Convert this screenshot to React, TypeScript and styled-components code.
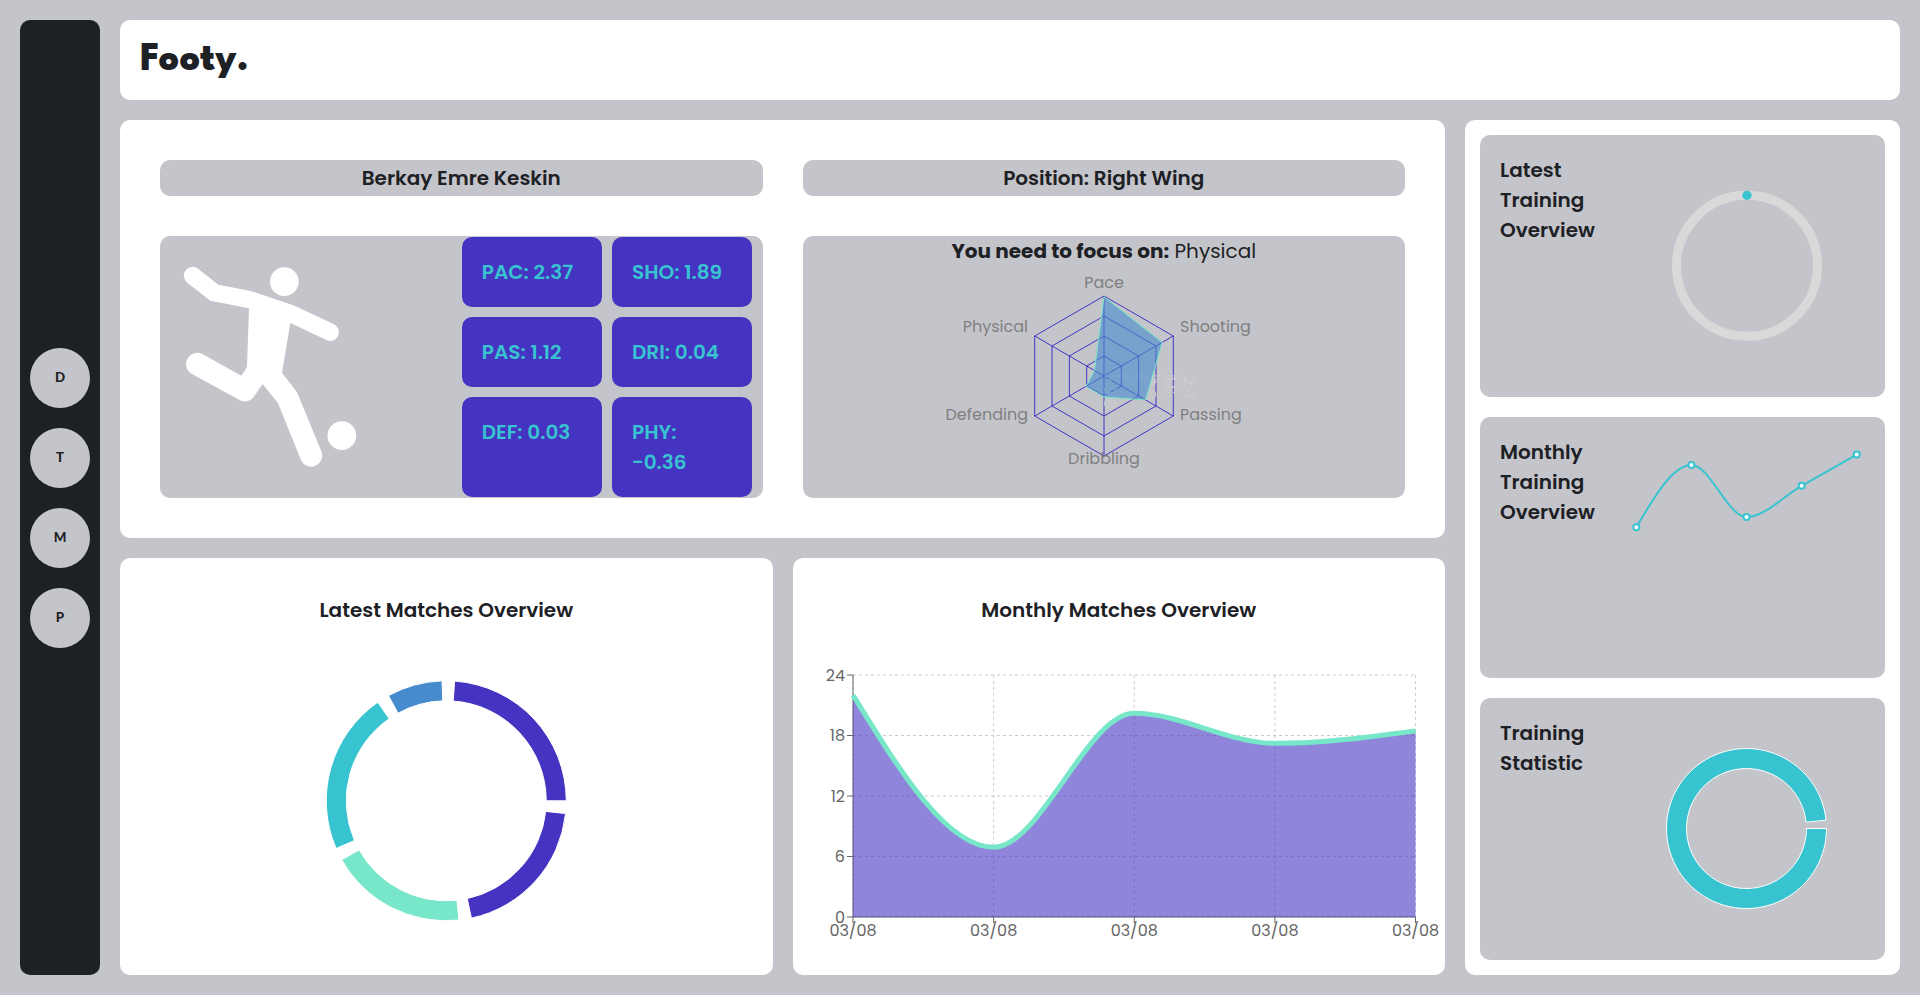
import React from 'react';
import styled, { createGlobalStyle } from 'styled-components';

const c = {
  gray: '#c4c5ca',
  dark: '#1d2024',
  purple: '#4533c1',
  teal: '#38c3d1',
  mint: '#78e6c8',
  blue: '#468bce',
  white: '#ffffff',
};

const Global = createGlobalStyle`
  * { box-sizing: border-box; }
  html, body { margin: 0; padding: 0; }
  body {
    background: ${c.gray};
    color: ${c.dark};
    font-family: Poppins, Inter, 'Open Sans', sans-serif;
    overflow: hidden;
  }
  svg { display: block; }
`;

/* ---------- layout ---------- */

const Page = styled.div`
  display: flex;
  gap: 20px;
  width: 1920px;
  height: 995px;
  padding: 20px;
`;

const Sidebar = styled.nav`
  display: flex;
  flex-direction: column;
  align-items: center;
  justify-content: center;
  gap: 20px;
  width: 80px;
  border-radius: 10px;
  background: ${c.dark};
`;

const NavButton = styled.a`
  display: flex;
  align-items: center;
  justify-content: center;
  width: 60px;
  height: 60px;
  padding-top: 1px;
  border-radius: 50%;
  background: ${c.gray};
  font: 900 13.333px/1 Lato, sans-serif;
`;

const Content = styled.div`
  display: grid;
  flex: 1;
  grid-template-columns: 1325px 1fr;
  grid-template-rows: 80px 1fr;
  gap: 20px;
`;

const Panel = styled.section`
  border-radius: 10px;
  background: ${c.white};
`;

const Header = styled(Panel)`
  grid-column: 1 / -1;
  padding: 21px 20px 19px;
`;

const Logo = styled.h1`
  margin: 0;
  font: 800 40px/40px 'League Spartan', Lato, sans-serif;
`;

const Main = styled.main`
  display: grid;
  grid-template-rows: 1fr 1fr;
  gap: 20px;
`;

const PlayerPanel = styled(Panel)`
  display: grid;
  grid-template-columns: 1fr 1fr;
  grid-template-rows: 36px 1fr;
  gap: 40px;
  padding: 40px;
`;

const Badge = styled.div`
  display: flex;
  align-items: center;
  justify-content: center;
  border-radius: 10px;
  background: ${c.gray};
`;

const Label = styled.span`
  font-size: 20px;
  font-weight: 600;
  line-height: 30px;
  white-space: nowrap;
`;

const PlayerCard = styled.div`
  display: flex;
  align-items: center;
  justify-content: space-between;
  padding-right: 10.2px;
  border-radius: 10px;
  background: ${c.gray};
`;

const Stats = styled.div`
  display: grid;
  grid-template-columns: 140.3px 140.3px;
  grid-template-rows: 70px 70px 100px;
  gap: 10px;
`;

const Stat = styled.div`
  display: flex;
  flex-direction: column;
  padding: 20px;
  border-radius: 10px;
  background: ${c.purple};
  color: ${c.teal};
`;

const RadarCard = styled.div`
  display: flex;
  flex-direction: column;
  align-items: center;
  border-radius: 10px;
  background: ${c.gray};
`;

const Focus = styled.p`
  margin: 0;
  font-size: 20px;
  line-height: 30px;
  font-weight: 400;

  b {
    font-weight: 700;
  }
`;

const Matches = styled.div`
  display: grid;
  grid-template-columns: 1fr 1fr;
  gap: 20px;
`;

const ChartPanel = styled(Panel)`
  display: flex;
  flex-direction: column;
  align-items: center;
  padding-top: 37.5px;
`;

const Aside = styled(Panel)`
  display: flex;
  flex-direction: column;
  gap: 20px;
  padding: 15px;
`;

const TrainingCard = styled.div`
  display: flex;
  flex: 1;
  justify-content: space-between;
  padding-left: 20px;
  border-radius: 10px;
  background: ${c.gray};
`;

const CardTitle = styled.div`
  display: flex;
  flex-direction: column;
  padding-top: 20px;
`;

/* ---------- chart helpers ---------- */

type Point = [number, number];

/** Monotone cubic interpolation through points with increasing x. */
function monotone(points: Point[]): string {
  const n = points.length;
  const slope = (i: number) => (points[i + 1][1] - points[i][1]) / (points[i + 1][0] - points[i][0]);
  const t: number[] = [];
  for (let i = 1; i < n - 1; i++) {
    const h0 = points[i][0] - points[i - 1][0];
    const h1 = points[i + 1][0] - points[i][0];
    const s0 = slope(i - 1);
    const s1 = slope(i);
    const p = (s0 * h1 + s1 * h0) / (h0 + h1);
    t[i] = (Math.sign(s0) + Math.sign(s1)) * Math.min(Math.abs(s0), Math.abs(s1), 0.5 * Math.abs(p)) || 0;
  }
  t[0] = (3 * slope(0) - t[1]) / 2;
  t[n - 1] = (3 * slope(n - 2) - t[n - 2]) / 2;
  let d = `M${points[0][0]},${points[0][1]}`;
  for (let i = 0; i < n - 1; i++) {
    const [x0, y0] = points[i];
    const [x1, y1] = points[i + 1];
    const dx = (x1 - x0) / 3;
    d += `C${x0 + dx},${y0 + dx * t[i]} ${x1 - dx},${y1 - dx * t[i + 1]} ${x1},${y1}`;
  }
  return d;
}

/** Ring sector, angles in degrees counted counter-clockwise from the right. */
function sector(cx: number, cy: number, inner: number, outer: number, from: number, to: number): string {
  const at = (r: number, a: number) => {
    const rad = (a * Math.PI) / 180;
    return `${cx + r * Math.cos(rad)},${cy - r * Math.sin(rad)}`;
  };
  const large = to - from > 180 ? 1 : 0;
  return `M${at(outer, from)}A${outer},${outer} 0 ${large} 0 ${at(outer, to)}L${at(inner, to)}A${inner},${inner} 0 ${large} 1 ${at(inner, from)}Z`;
}

/* ---------- drawings ---------- */

const PlayerIcon = () => (
  <svg width="200" height="261.5" viewBox="30 48 600 784.5" fill={c.white}>
    <circle cx="403" cy="185" r="43" />
    <circle cx="575.5" cy="647" r="43" />
    <path d="M144 146L205 194L302 213L430 256L552 313A26 26 0 0 1 529 360L421 309L396 458L441 517L514 694A33 33 0 0 1 453 720L384 550L338 492L313 528A32 32 0 0 1 270 541L122 460A34 34 0 0 1 157 402L274 467L291 442L297 265L181 242L112 188A26 26 0 0 1 144 146Z" />
  </svg>
);

const skills: { name: string; value: number; x: number; y: number; anchor: 'start' | 'middle' | 'end' }[] = [
  { name: 'Pace', value: 2.37, x: 301, y: 22, anchor: 'middle' },
  { name: 'Shooting', value: 1.89, x: 377, y: 66, anchor: 'start' },
  { name: 'Passing', value: 1.12, x: 377, y: 154, anchor: 'start' },
  { name: 'Dribbling', value: 0.04, x: 301, y: 198, anchor: 'middle' },
  { name: 'Defending', value: 0.03, x: 225, y: 154, anchor: 'end' },
  { name: 'Physical', value: -0.36, x: 225, y: 66, anchor: 'end' },
];

const RadarChart = () => {
  const cx = 301;
  const cy = 110;
  const hex = (radii: number[]) =>
    radii
      .map((r, i) => {
        const a = (i * Math.PI) / 3;
        return `${cx + r * Math.sin(a)},${cy - r * Math.cos(a)}`;
      })
      .join(' ');
  const ticks = ['-0.8', '0', '0.8', '1.6', '2.4'];
  return (
    <svg width="602.5" height="231" fontSize="16">
      <g fill="none" stroke={c.purple}>
        {[0, 1, 2, 3, 4, 5].map((i) => {
          const a = (i * Math.PI) / 3;
          return <line key={i} x1={cx} y1={cy} x2={cx + 80 * Math.sin(a)} y2={cy - 80 * Math.cos(a)} />;
        })}
        {[20, 40, 60, 80].map((r) => (
          <polygon key={r} points={hex(Array(6).fill(r))} />
        ))}
      </g>
      <g fill="#808080">
        {skills.map((s) => (
          <text key={s.name} x={s.x} y={s.y} textAnchor={s.anchor}>
            {s.name}
          </text>
        ))}
      </g>
      <line x1={cx} y1={cy} x2={cx + 80} y2={cy} stroke="#cccccc" />
      <g fill="#cccccc">
        {ticks.map((t, i) => (
          <text key={t} transform={`translate(${cx + i * 20} ${cy}) rotate(90)`}>
            {t}
          </text>
        ))}
      </g>
      <polygon points={hex(skills.map((s) => ((s.value + 0.8) / 3.2) * 80))} fill={c.blue} fillOpacity="0.6" stroke={c.mint} />
    </svg>
  );
};

const slices = [
  { from: 0, to: 86, color: c.purple },
  { from: 92, to: 118.8, color: c.blue },
  { from: 124.8, to: 203.4, color: c.teal },
  { from: 209.4, to: 276.1, color: c.mint },
  { from: 282.1, to: 353.9, color: c.purple },
];

const MatchesDonut = () => (
  <svg width="652.5" height="350" stroke={c.white}>
    {slices.map((s) => (
      <path key={s.from} d={sector(326.25, 175.8, 100, 120, s.from, s.to)} fill={s.color} />
    ))}
  </svg>
);

const MatchesArea = () => {
  const left = 60;
  const right = 622.5;
  const top = 50;
  const bottom = 292;
  const step = (right - left) / 4;
  const values = [22, 6.91, 20.2, 17.22, 18.45];
  const xs = values.map((_, i) => left + i * step);
  const ys = [24, 18, 12, 6, 0].map((v) => ({ v, y: bottom - (v / 24) * (bottom - top) }));
  const curve = monotone(values.map((v, i): Point => [xs[i], bottom - (v / 24) * (bottom - top)]));
  return (
    <svg width="652.5" height="350" fontSize="16">
      <g stroke="#cccccc" strokeDasharray="3 3">
        {ys.map(({ v, y }) => (
          <line key={v} x1={left} x2={right} y1={y} y2={y} />
        ))}
        {xs.map((x) => (
          <line key={x} x1={x} x2={x} y1={top} y2={bottom} />
        ))}
      </g>
      <g stroke="#666666">
        <line x1={left} x2={right} y1={bottom} y2={bottom} />
        <line x1={left} x2={left} y1={top} y2={bottom} />
        {ys.map(({ v, y }) => (
          <line key={v} x1={left - 6} x2={left} y1={y} y2={y} />
        ))}
        {xs.map((x) => (
          <line key={x} x1={x} x2={x} y1={bottom} y2={bottom + 6} />
        ))}
      </g>
      <g fill="#666666">
        {ys.map(({ v, y }) => (
          <text key={v} x={left - 8} y={y + 5.7} textAnchor="end">
            {v}
          </text>
        ))}
        {xs.map((x) => (
          <text key={x} x={x} y={bottom + 18.7} textAnchor="middle">
            03/08
          </text>
        ))}
      </g>
      <path d={`${curve}L${right},${bottom}L${left},${bottom}Z`} fill={c.purple} fillOpacity="0.6" />
      <path d={curve} fill="none" stroke={c.mint} strokeWidth="5" />
    </svg>
  );
};

const Gauge = () => (
  <svg width="276" height="261">
    <circle cx="138" cy="130.8" r="70.5" fill="none" stroke="#d9d9d9" strokeWidth="9" />
    <circle cx="138" cy="60.3" r="4.6" fill={c.teal} />
  </svg>
);

const trend: Point[] = [
  [27.3, 110.3],
  [82.4, 48],
  [137.5, 100],
  [192.6, 68.8],
  [247.7, 37.6],
];

const TrendLine = () => (
  <svg width="276" height="261" stroke={c.teal} strokeWidth="2">
    <path d={monotone(trend)} fill="none" />
    {trend.map(([x, y]) => (
      <circle key={x} cx={x} cy={y} r="3" fill={c.white} />
    ))}
  </svg>
);

const StatisticRing = () => (
  <svg width="276" height="261">
    <path d={sector(137.5, 130.5, 60, 80, 6, 360)} fill={c.teal} stroke={c.white} />
  </svg>
);

/* ---------- page ---------- */

const stats: string[][] = [
  ['PAC: 2.37'],
  ['SHO: 1.89'],
  ['PAS: 1.12'],
  ['DRI: 0.04'],
  ['DEF: 0.03'],
  ['PHY:', '-0.36'],
];

const trainings: { lines: string[]; chart: React.ReactNode }[] = [
  { lines: ['Latest', 'Training', 'Overview'], chart: <Gauge /> },
  { lines: ['Monthly', 'Training', 'Overview'], chart: <TrendLine /> },
  { lines: ['Training', 'Statistic'], chart: <StatisticRing /> },
];

const Lines = ({ lines }: { lines: string[] }) => (
  <>
    {lines.map((text) => (
      <Label key={text}>{text}</Label>
    ))}
  </>
);

export default function App() {
  return (
    <>
      <Global />
      <Page>
        <Sidebar>
          {['D', 'T', 'M', 'P'].map((l) => (
            <NavButton key={l}>{l}</NavButton>
          ))}
        </Sidebar>
        <Content>
          <Header>
            <Logo>Footy.</Logo>
          </Header>
          <Main>
            <PlayerPanel>
              <Badge>
                <Label>Berkay Emre Keskin</Label>
              </Badge>
              <Badge>
                <Label>Position: Right Wing</Label>
              </Badge>
              <PlayerCard>
                <PlayerIcon />
                <Stats>
                  {stats.map((lines) => (
                    <Stat key={lines[0]}>
                      <Lines lines={lines} />
                    </Stat>
                  ))}
                </Stats>
              </PlayerCard>
              <RadarCard>
                <Focus>
                  <b>You need to focus on:</b> Physical
                </Focus>
                <RadarChart />
              </RadarCard>
            </PlayerPanel>
            <Matches>
              <ChartPanel>
                <Label>Latest Matches Overview</Label>
                <MatchesDonut />
              </ChartPanel>
              <ChartPanel>
                <Label>Monthly Matches Overview</Label>
                <MatchesArea />
              </ChartPanel>
            </Matches>
          </Main>
          <Aside>
            {trainings.map(({ lines, chart }, i) => (
              <TrainingCard key={i}>
                <CardTitle>
                  <Lines lines={lines} />
                </CardTitle>
                {chart}
              </TrainingCard>
            ))}
          </Aside>
        </Content>
      </Page>
    </>
  );
}
